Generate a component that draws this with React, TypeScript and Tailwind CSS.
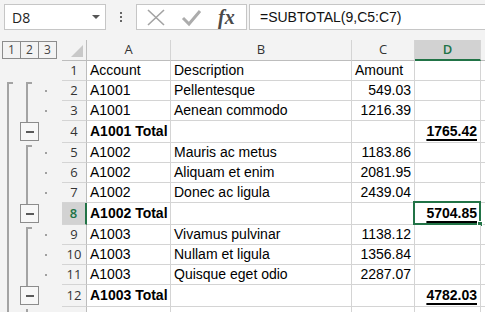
import React from 'react';

type Row = {
  n: number;
  a?: string;
  b?: string;
  c?: string;
  d?: string;
  total?: boolean;
  head?: boolean;
};

const rows: Row[] = [
  { n: 1, a: 'Account', b: 'Description', c: 'Amount', head: true },
  { n: 2, a: 'A1001', b: 'Pellentesque', c: '549.03' },
  { n: 3, a: 'A1001', b: 'Aenean commodo', c: '1216.39' },
  { n: 4, a: 'A1001 Total', d: '1765.42', total: true },
  { n: 5, a: 'A1002', b: 'Mauris ac metus', c: '1183.86' },
  { n: 6, a: 'A1002', b: 'Aliquam et enim', c: '2081.95' },
  { n: 7, a: 'A1002', b: 'Donec ac ligula', c: '2439.04' },
  { n: 8, a: 'A1002 Total', d: '5704.85', total: true },
  { n: 9, a: 'A1003', b: 'Vivamus pulvinar', c: '1138.12' },
  { n: 10, a: 'A1003', b: 'Nullam et ligula', c: '1356.84' },
  { n: 11, a: 'A1003', b: 'Quisque eget odio', c: '2287.07' },
  { n: 12, a: 'A1003 Total', d: '4782.03', total: true },
  { n: 13 },
];

const cellFont = { fontFamily: '"Liberation Sans", Arial, sans-serif' };
const uiFont = { fontFamily: '"Open Sans", "Noto Sans", sans-serif' };

function Toolbar() {
  return (
    <div className="flex h-[40px] items-start gap-0 pt-[4px] pl-[4px]">
      <div className="flex h-[26px] w-[102px] items-center justify-between border border-[#c6c6c6] bg-white pl-[7px] pr-[5px]">
        <span className="text-[14px] text-[#222]" style={uiFont}>
          D8
        </span>
        <svg width="8" height="5" viewBox="0 0 8 5">
          <path d="M0 0 L8 0 L4 4 Z" fill="#555" />
        </svg>
      </div>
      <div className="flex h-[26px] w-[30px] flex-col items-center justify-center gap-[2px]">
        <span className="h-[2px] w-[2px] bg-[#666]" />
        <span className="h-[2px] w-[2px] bg-[#666]" />
        <span className="h-[2px] w-[2px] bg-[#666]" />
      </div>
      <div className="flex h-[26px] w-[111px] items-center border border-[#c6c6c6] bg-white">
        <svg width="111" height="24" viewBox="0 0 111 24">
          <path d="M11 5 L27 20 M27 5 L11 20" stroke="#a3a3a3" strokeWidth="1.6" fill="none" />
          <path d="M46 13 L52 19 L63 6" stroke="#acacac" strokeWidth="3" fill="none" />
        </svg>
        <span
          className="-ml-[30px] text-[20px] font-bold italic text-[#4a4a4a]"
          style={{ fontFamily: '"Liberation Serif", "DejaVu Serif", serif' }}
        >
          fx
        </span>
      </div>
      <div className="ml-[2px] flex h-[26px] flex-1 items-center border border-r-0 border-[#c6c6c6] bg-white pl-[10px]">
        <span className="text-[14px] text-[#111]" style={cellFont}>
          =SUBTOTAL(9,C5:C7)
        </span>
      </div>
    </div>
  );
}

function Outline() {
  const stroke = '#a3a3a3';
  const box = (y: number) => (
    <g key={y}>
      <rect x="20.5" y={y + 0.5} width="18" height="18" fill="#f7f7f7" stroke="#8c8c8c" />
      <rect x="26" y={y + 9} width="8" height="2" fill="#5a5a5a" />
    </g>
  );
  const dots = [30, 50, 92, 112, 132, 174, 194, 214];
  return (
    <svg width="62" height="251" viewBox="0 0 62 251">
      {/* level 1 bracket */}
      <rect x="7" y="21" width="2" height="230" fill={stroke} />
      <rect x="7" y="21" width="6" height="2" fill={stroke} />
      {/* level 2 groups */}
      <rect x="26" y="21" width="2" height="40" fill={stroke} />
      <rect x="26" y="21" width="6" height="2" fill={stroke} />
      <rect x="26" y="84" width="2" height="59" fill={stroke} />
      <rect x="26" y="84" width="6" height="2" fill={stroke} />
      <rect x="26" y="166" width="2" height="59" fill={stroke} />
      <rect x="26" y="166" width="6" height="2" fill={stroke} />
      <rect x="26" y="248" width="2" height="3" fill={stroke} />
      {box(61)}
      {box(143)}
      {box(225)}
      {dots.map(y => (
        <rect key={y} x="45" y={y - 1} width="2" height="2" fill="#a0a0a0" />
      ))}
    </svg>
  );
}

function Cell({ children, className = '' }: { children?: React.ReactNode; className?: string }) {
  return (
    <div className={`flex items-center overflow-hidden whitespace-nowrap border-r border-b border-[#d4d4d4] bg-white px-[3px] text-[14px] text-black ${className}`}>
      {children}
    </div>
  );
}

export default function App() {
  const cols = 'grid-cols-[25px_84px_181px_63px_66px_1fr]';
  return (
    <div className="h-[312px] w-[485px] overflow-hidden bg-[#f3f3f3]" style={cellFont}>
      <Toolbar />
      <div className="flex">
        <div className="w-[62px] shrink-0">
          <div className="flex h-[21px] items-start pl-[2px] pt-[1px]">
            {['1', '2', '3'].map(l => (
              <div
                key={l}
                className="flex h-[18px] w-[19px] items-center justify-center border border-[#8c8c8c] text-[12px] text-[#444] -mr-[1px]"
                style={uiFont}
              >
                {l}
              </div>
            ))}
          </div>
          <Outline />
        </div>
        <div className={`grid flex-1 ${cols}`}>
          {/* header row */}
          <div className="relative h-[21px] border-r border-b border-[#bdbdbd]">
            <svg className="absolute right-[3px] bottom-[3px]" width="12" height="12" viewBox="0 0 12 12">
              <path d="M12 0 L12 12 L0 12 Z" fill="#c8c8c8" />
            </svg>
          </div>
          {['A', 'B', 'C'].map(h => (
            <div
              key={h}
              className="flex h-[21px] items-center justify-center border-r border-b border-r-[#d4d4d4] border-b-[#bdbdbd] text-[13px] text-[#333]"
              style={uiFont}
            >
              {h}
            </div>
          ))}
          <div
            className="flex h-[21px] items-center justify-center border-r border-r-[#d4d4d4] border-b-2 border-b-[#217346] bg-[#d2d2d2] text-[13px] font-semibold text-[#217346]"
            style={uiFont}
          >
            D
          </div>
          <div className="h-[21px] border-b border-[#bdbdbd]" />

          {rows.map(r => {
            const h = r.total ? 'h-[22px]' : 'h-[20px]';
            const sel = r.n === 8;
            return (
              <React.Fragment key={r.n}>
                <div
                  className={`flex ${h} items-center justify-center border-b border-[#d4d4d4] text-[13px] ${
                    sel
                      ? 'border-r-2 border-r-[#217346] bg-[#d2d2d2] font-semibold text-[#217346]'
                      : 'border-r border-r-[#bdbdbd] text-[#333]'
                  }`}
                  style={uiFont}
                >
                  {r.n < 13 ? r.n : ''}
                </div>
                <Cell className={`${h} ${r.total ? 'font-bold' : ''}`}>{r.a}</Cell>
                <Cell className={h}>{r.b}</Cell>
                <Cell className={`${h} ${r.head ? '' : 'justify-end'}`}>{r.c}</Cell>
                <Cell className={`${h} relative justify-end overflow-visible font-bold`}>
                  {r.d && <span className="underline decoration-[1.5px] underline-offset-[3px]">{r.d}</span>}
                  {sel && (
                    <div className="pointer-events-none absolute -top-[2px] -left-[2px] -right-[1px] -bottom-[1px] border-2 border-[#217346]">
                      <div className="absolute -right-[4px] -bottom-[4px] h-[6px] w-[6px] border border-white bg-[#217346]" />
                    </div>
                  )}
                </Cell>
                <div className={`${h} border-b border-[#d4d4d4] bg-white`} />
              </React.Fragment>
            );
          })}
        </div>
      </div>
    </div>
  );
}
